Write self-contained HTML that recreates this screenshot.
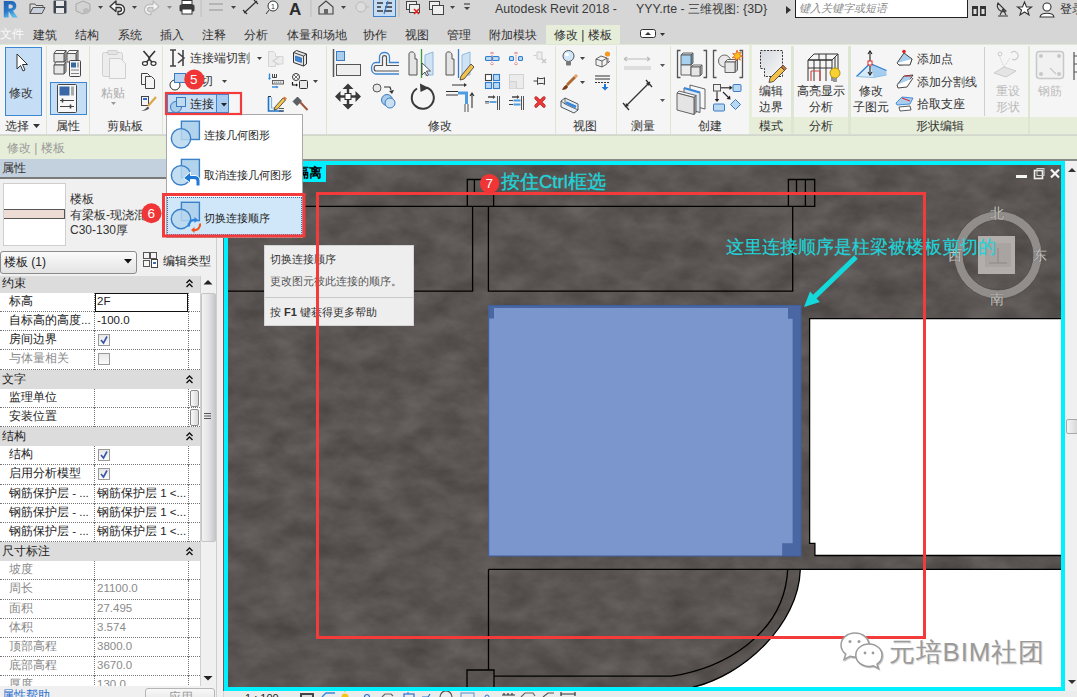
<!DOCTYPE html>
<html><head><meta charset="utf-8">
<style>
*{margin:0;padding:0;box-sizing:border-box}
html,body{width:1077px;height:697px;overflow:hidden;background:#d6d6d6;font-family:"Liberation Sans",sans-serif;font-size:12px;color:#222}
.a{position:absolute}
.t{position:absolute;white-space:nowrap;line-height:1;font-weight:500}
</style></head><body>
<!-- top title bar -->
<div class="a" style="left:0;top:0;width:1077px;height:44px;background:#d6d6d6"></div>

<!-- ===== TOP BAR ===== -->
<svg class="a" style="left:0;top:0" width="22" height="20"><defs><linearGradient id="gR" x1="0" y1="0" x2="0.4" y2="1"><stop offset="0" stop-color="#1f5db0"/><stop offset="0.6" stop-color="#2a78c8"/><stop offset="1" stop-color="#58b8ea"/></linearGradient></defs><path fill-rule="evenodd" fill="url(#gR)" d="M3.8 1h7.4a5 5 0 0 1 1.8 9.7L17.6 17.6h-5.2L8.6 11.3v6.3H3.8z M8.6 4.4v4h2.2a2 2 0 0 0 0-4z"/></svg>
<svg class="a" style="left:0;top:-2px" width="480" height="20" viewBox="0 0 480 20">
 <!-- open -->
 <path d="M30 6h5l1 1.5h7v2H33l-3 6z" fill="#dcdcdc" stroke="#555" stroke-width="1"/>
 <path d="M30 15.5l3-6h12l-3 6z" fill="#c8d0dc" stroke="#555" stroke-width="1"/>
 <!-- save -->
 <rect x="53.5" y="2.5" width="13" height="13" rx="1" fill="#3d4552"/>
 <rect x="56" y="3" width="8" height="5" fill="#e8e8e8"/>
 <rect x="56" y="10" width="8" height="5" fill="#e8e8e8"/>
 <!-- cube gray -->
 <path d="M76 6l7-3 7 3v7l-7 3-7-3z" fill="#d2d2d2" stroke="#a8a8a8"/>
 <circle cx="86" cy="13" r="3" fill="#bbb"/>
 <path d="M98 8h5l-2.5 3z" fill="#444"/>
 <!-- undo -->
 <path d="M110 8.5l6-5.5v3.5h3.5a5 5 0 0 1 0 10h-1.5v-3h1.5a2 2 0 0 0 0-4h-3.5v4z" fill="#f4f4f4" stroke="#333" stroke-width="1.3" stroke-linejoin="round"/>
 <path d="M132 8h5l-2.5 3z" fill="#444"/>
 <!-- redo gray -->
 <path d="M159 8.5l-6-5.5v3.5h-3.5a5 5 0 0 0 0 10h1.5v-3h-1.5a2 2 0 0 1 0-4h3.5v4z" fill="#f4f4f4" stroke="#bdbdbd" stroke-width="1.3" stroke-linejoin="round"/>
 <path d="M167 8h5l-2.5 3z" fill="#888"/>
 <!-- print -->
 <rect x="182" y="2.5" width="10" height="4" fill="#fff" stroke="#333"/>
 <rect x="179.5" y="6.5" width="15" height="7" rx="1.5" fill="#3b3b3b"/>
 <rect x="182" y="11" width="10" height="5" fill="#fff" stroke="#333"/>
 <rect x="200.5" y="1" width="1" height="18" fill="#bdbdbd"/>
 <!-- measure gray -->
 <path d="M209 6h14M209 12h14" stroke="#aaa" stroke-width="1.5"/>
 <path d="M231 8h5l-2.5 3z" fill="#444"/>
 <!-- aligned dim -->
 <path d="M244 15l13-12M243 12l4 4M254 2l4 4" stroke="#333" stroke-width="1.2"/>
 <!-- tag -->
 <circle cx="273" cy="8" r="5" fill="#fff" stroke="#333"/>
 <path d="M269 12l-3 4" stroke="#333"/>
 <text x="271" y="11" font-size="7" font-family="Liberation Sans" fill="#333">1</text>
 <!-- A -->
 <text x="289" y="17" font-size="17" font-weight="bold" font-family="Liberation Sans" fill="#2b2b2b">A</text>
 <rect x="310.5" y="1" width="1" height="18" fill="#bdbdbd"/>
 <!-- house -->
 <path d="M319 9l7-6 7 6v7h-14z" fill="#d8d8d8" stroke="#444" stroke-width="1.1"/>
 <rect x="324" y="11" width="4" height="5" fill="#666"/>
 <path d="M341 8h5l-2.5 3z" fill="#444"/>
 <!-- gray -->
 <path d="M356 9a5 5 0 1 0 10 0a5 5 0 1 0 -10 0" fill="#ddd" stroke="#bbb"/>
 <path d="M366 9l3 0" stroke="#bbb"/>
 <!-- thin lines highlighted -->
 <rect x="373.5" y="0.5" width="22" height="18" fill="#c5dcf3" stroke="#3c7fc9"/>
 <path d="M377 5h6M377 9h4M377 13h6M386 5h6M385 9h7M384 13h8" stroke="#333" stroke-width="1.5"/>
 <path d="M388 3l-4 13" stroke="#3a78c8" stroke-width="1.2"/>
 <rect x="398.5" y="1" width="1" height="18" fill="#bdbdbd"/>
 <!-- close hidden -->
 <rect x="406.5" y="3.5" width="10" height="8" fill="#eee" stroke="#444"/>
 <rect x="409.5" y="6.5" width="10" height="8" fill="#eee" stroke="#444"/>
 <path d="M414 11l5 5M419 11l-5 5" stroke="#e0201a" stroke-width="1.6"/>
 <!-- switch windows -->
 <rect x="429.5" y="3.5" width="10" height="8" fill="#eee" stroke="#444"/>
 <rect x="432.5" y="7.5" width="11" height="9" fill="#eee" stroke="#444"/>
 <path d="M450 8h5l-2.5 3z" fill="#444"/>
 <path d="M464 6h6" stroke="#444" stroke-width="1.2"/><path d="M464 9h6l-3 3z" fill="#444"/>
</svg>
<div class="t" style="left:495px;top:3px;font-size:12.4px;color:#3a3a3a">Autodesk Revit 2018 -</div>
<div class="t" style="left:636px;top:3px;font-size:12.4px;color:#3a3a3a">YYY.rte - 三维视图: {3D}</div>
<svg class="a" style="left:785px;top:5px" width="8" height="10"><path d="M1 1l5 4-5 4z" fill="#333"/></svg>
<div class="a" style="left:795px;top:0;width:173px;height:18px;background:#fff;border:1px solid #222;border-top:none"></div>
<div class="t" style="left:799px;top:3px;font-size:11px;font-style:italic;color:#8a8a8a">键入关键字或短语</div>
<svg class="a" style="left:968px;top:0" width="109" height="20" viewBox="968 0 109 20">
 <path d="M972 6h6v10h-6zM980 6h6v10h-6z" fill="#333"/><rect x="973.5" y="9" width="3" height="5" fill="#ddd"/><rect x="981.5" y="9" width="3" height="5" fill="#ddd"/>
 <path d="M998 16h10M1000 15l3-6M1006 15l-3-6M998 3a6 6 0 0 0 8 8z" fill="none" stroke="#333" stroke-width="1.1"/>
 <path d="M1024.5 2l2 5h5l-4 3 1.5 5-4.5-3-4.5 3 1.5-5-4-3h5z" fill="#fff" stroke="#333" stroke-width="1.1"/>
 <circle cx="1047" cy="7" r="4" fill="#fff" stroke="#333" stroke-width="1.1"/><path d="M1040 17c1-5 13-5 14 0z" fill="#fff" stroke="#333" stroke-width="1.1"/>
</svg>
<div class="t" style="left:1060px;top:3px;font-size:12px;color:#333">登录</div>
<!-- tabs -->
<div class="a" style="left:546px;top:25px;width:74px;height:20px;background:#e6eed9"></div>
<div class="t" style="left:0;top:28px;font-size:12px;color:#fafafa">文件</div>
<div class="t" style="left:33px;top:29px;font-size:12px;color:#333;word-spacing:0">建筑</div>
<div class="t" style="left:75px;top:29px;font-size:12px;color:#333">结构</div>
<div class="t" style="left:118px;top:29px;font-size:12px;color:#333">系统</div>
<div class="t" style="left:160px;top:29px;font-size:12px;color:#333">插入</div>
<div class="t" style="left:202px;top:29px;font-size:12px;color:#333">注释</div>
<div class="t" style="left:244px;top:29px;font-size:12px;color:#333">分析</div>
<div class="t" style="left:287px;top:29px;font-size:12px;color:#333">体量和场地</div>
<div class="t" style="left:363px;top:29px;font-size:12px;color:#333">协作</div>
<div class="t" style="left:405px;top:29px;font-size:12px;color:#333">视图</div>
<div class="t" style="left:447px;top:29px;font-size:12px;color:#333">管理</div>
<div class="t" style="left:489px;top:29px;font-size:12px;color:#333">附加模块</div>
<div class="t" style="left:554px;top:29px;font-size:12px;color:#333">修改 | 楼板</div>
<svg class="a" style="left:638px;top:27px" width="30" height="14"><rect x="2.5" y="2.5" width="15" height="8" rx="2" fill="#fff" stroke="#333"/><path d="M7 8l3-3 3 3z" fill="#333"/><path d="M22 6h5l-2.5 3z" fill="#333"/></svg>

<!-- ribbon -->
<div class="a" id="ribbon" style="left:0;top:44px;width:1077px;height:91px;background:#f5f5f5;border-top:1px solid #dfe8d4"></div>
<!-- context bar placeholder -->
<div class="a" style="left:0;top:135px;width:1077px;height:24px;background:#e6eed9;border-top:1px solid #d0d8c6"></div>
<div class="a" style="left:0;top:159px;width:1077px;height:2px;background:#8a8a8a"></div>

<!-- ===== RIBBON CONTENT ===== -->
<div class="a" style="left:752px;top:117px;width:39px;height:17px;background:#e6eed9"></div>
<div class="a" style="left:794px;top:117px;width:54px;height:17px;background:#e6eed9"></div>
<div class="a" style="left:851px;top:117px;width:177px;height:17px;background:#e6eed9"></div>
<div class="a" style="left:1030px;top:117px;width:47px;height:17px;background:#e6eed9"></div>
<div class="a" style="left:749px;top:45px;width:3px;height:89px;background:#e6eed9"></div>
<div class="a" style="left:0;top:134px;width:1077px;height:1px;background:#d9d9d9"></div>
<svg class="a" style="left:0;top:44px" width="1077" height="91" viewBox="0 44 1077 91">
 <!-- separators -->
 <g fill="#dde6d3">
 <rect x="46" y="46" width="1" height="88"/><rect x="89" y="46" width="1" height="88"/><rect x="162" y="46" width="1" height="88"/>
 <rect x="326" y="46" width="1" height="88"/><rect x="555" y="46" width="1" height="88"/><rect x="616" y="46" width="1" height="88"/>
 <rect x="670" y="46" width="1" height="88"/><rect x="791" y="46" width="3" height="88"/><rect x="848" y="46" width="3" height="88"/>
 <rect x="1028" y="46" width="2" height="88"/>
 </g>
 <rect x="984" y="47" width="1" height="69" fill="#cfcfcf"/>
 <!-- 修改 select button -->
 <rect x="5.5" y="47.5" width="36" height="68" fill="#c6def5" stroke="#3d87d2"/>
 <path d="M17 54v15l3.5-3.5 2.5 5.5 2-1-2.5-5.5h5z" fill="#fff" stroke="#333" stroke-width="1"/>
 <!-- 属性 -->
 <g stroke="#555" stroke-width="1" stroke-linejoin="round">
 <path d="M54 53.5l2-3h10l-2 3z" fill="#f8f8f8"/><path d="M64 53.5l2-3v9.5l-2 2.5z" fill="#bdbdbd"/><rect x="54" y="53.5" width="10" height="8.5" fill="#e6e6e6"/>
 <path d="M67 53.5l2-3h9l-2 3z" fill="#f8f8f8"/><path d="M76 53.5l2-3v9.5l-2 2.5z" fill="#bdbdbd"/><rect x="67" y="53.5" width="9" height="8.5" fill="#e6e6e6"/>
 <path d="M54 65l2-3h10l-2 3z" fill="#f8f8f8"/><path d="M64 65l2-3v9.5l-2 2.5z" fill="#bdbdbd"/><rect x="54" y="65" width="10" height="9" fill="#e6e6e6"/>
 </g>
 <rect x="69.5" y="60.5" width="11" height="16" rx="1" fill="#f4f4f4" stroke="#444"/><rect x="71" y="62.5" width="5" height="5" fill="#3566a6"/><rect x="77" y="62.5" width="2" height="5" fill="#aaa"/>
 <path d="M71 70h8M71 73.5h8" stroke="#666" stroke-width="0.8"/>
 <rect x="50.5" y="82.5" width="36" height="32" fill="#c6def5" stroke="#3d87d2"/>
 <rect x="57.5" y="84.5" width="19" height="28" rx="1" fill="#f7f7f7" stroke="#444"/>
 <rect x="59.5" y="86.5" width="10" height="9" fill="#3a68a6"/><rect x="71" y="86.5" width="3" height="9" fill="#aaa"/>
 <path d="M60 100.5h14M60 106.5h14" stroke="#444" stroke-width="1"/><path d="M62.5 98.5v4M70.5 104.5v4" stroke="#444" stroke-width="1.6"/>
 <!-- clipboard (gray) -->
 <rect x="102.5" y="52.5" width="20" height="24" rx="2" fill="#ececec" stroke="#cfcfcf"/>
 <rect x="107.5" y="50.5" width="10" height="4" rx="1.5" fill="#e4e4e4" stroke="#cfcfcf"/>
 <path d="M109.5 58.5h11l5 5v15h-16z" fill="#f3f3f3" stroke="#cfcfcf"/>
 <path d="M111 102h5l-2.5 3z" fill="#999"/>
 <!-- scissors, copy, match -->
 <path d="M143.5 51l6.5 7.5M155 51l-6.5 7.5" stroke="#333" stroke-width="1.6"/><path d="M150 58.5l-4 4M148.5 58.5l4 4" stroke="#333" stroke-width="1.6"/>
 <ellipse cx="145" cy="63.5" rx="2.5" ry="1.8" fill="#fff" stroke="#333" stroke-width="1.2"/><ellipse cx="153.5" cy="63.5" rx="2.5" ry="1.8" fill="#fff" stroke="#333" stroke-width="1.2"/>
 <path d="M141.5 73.5h6l2 2v9h-8z" fill="#f4f4f4" stroke="#444"/><path d="M145.5 76.5h6l3 3v9h-9z" fill="#f4f4f4" stroke="#444"/>
 <rect x="141.5" y="96.5" width="7" height="9" fill="#f4f4f4" stroke="#444"/><rect x="143" y="98" width="4" height="2" fill="#2a6fd0"/>
 <path d="M141 110.5c3 0 5-2 6.5-4l2 1.5c-2 2.5-5 3-8.5 2.5z" fill="#555"/><path d="M148 106l8-9" stroke="#d9a648" stroke-width="2.2"/>
 <!-- geometry panel row icons -->
 <path d="M170 50h6M170 66h6M173 50v16M178 53l6 5-6 5M183 50v16" fill="none" stroke="#444" stroke-width="1.6"/>
 <path d="M257 57h5l-2.5 3z" fill="#444"/>
 <circle cx="175" cy="85" r="5" fill="#fff" stroke="#333"/><rect x="174.5" y="73.5" width="11" height="9" fill="#b9d4ee" stroke="#3b7bc0"/>
 <path d="M222 80h5l-2.5 3z" fill="#444"/>
 <!-- right small icons col1 -->
 <path d="M268.5 51.5h5l2 2v3h7.5v7.5h-7.5v2.5h-7z" fill="#ececec" stroke="#d4d4d4"/><path d="M279 57l-6 4 6 4" fill="none" stroke="#d0d0d0" stroke-width="1.2"/>
 <path d="M269.5 73.5v5" stroke="#2a86e0" stroke-width="1.4"/><path d="M268 78l1.5 2 1.5-2z" fill="#2a86e0"/>
 <path d="M272.5 74v3.5h4v-3.5M274.5 74v3.5" fill="none" stroke="#333" stroke-width="0.9"/>
 <rect x="272.5" y="80.5" width="11" height="3.5" fill="#e4e4e4" stroke="#555" stroke-width="0.9"/><path d="M274 82.2h8" stroke="#555" stroke-width="0.6" stroke-dasharray="1.2 0.8"/>
 <path d="M272 87h5" stroke="#2a86e0" stroke-width="1.4"/><path d="M276.5 85.5l2 1.5-2 1.5z" fill="#2a86e0"/>
 <path d="M268.5 97v14h15" fill="none" stroke="#1f72c8" stroke-width="1.6"/><path d="M271.5 97v11h6" fill="none" stroke="#7ab4ea" stroke-width="1.2"/><path d="M268 96.5h3" stroke="#333"/>
 <path d="M275 107l8-9 2.5 2-8 9-3.5 1z" fill="#f5c84a" stroke="#333" stroke-width="0.8"/><path d="M283 98l1.5-1.5 2.5 2-1.5 1.5z" fill="#e07a3a"/>
 <path d="M279 108.5h5M279 111h5" stroke="#444" stroke-width="0.9"/>
 <!-- col2 -->
 <path d="M293.5 52.5l3-2 10 3.5v10l-3 2-10-3.5z" fill="#e6e6e6" stroke="#333" stroke-width="1"/><path d="M293.5 52.5l10 3.5v10M303.5 56l3-2" fill="none" stroke="#333" stroke-width="0.9"/>
 <rect x="295.5" y="56" width="6" height="4.5" fill="#3a86d8" stroke="#1f5fa8" stroke-width="0.6" transform="skewY(18) translate(0,-96)"/>
 <circle cx="296" cy="77" r="3.5" fill="#fff" stroke="#333" stroke-width="1"/><path d="M294 75l4 4M298 75l-4 4" stroke="#333" stroke-width="0.7"/>
 <path d="M292.5 82v3h4" fill="none" stroke="#111" stroke-width="1.2"/><path d="M296 83.5l2 1.5-2 1.5z" fill="#111"/>
 <rect x="299.5" y="80.5" width="8" height="8" rx="1" fill="#e8e8e8" stroke="#333"/>
 <path d="M313 80h5l-2.5 3z" fill="#444"/>
 <path d="M293 101.5l4.5-4.5 4 4-4.5 4.5z" fill="#5a6068" stroke="#333" stroke-width="0.6"/><path d="M300 102l7.5 8" stroke="#a0523a" stroke-width="2"/>
 <!-- 修改 panel big icons row1 -->
 <path d="M333.5 49v28" stroke="#555" stroke-width="1.5"/><rect x="336.5" y="51.5" width="8" height="9" fill="#a9cdeb" stroke="#3b7bc0"/><rect x="336.5" y="64.5" width="24" height="11" fill="#eee" stroke="#555"/>
 <path d="M399 62.5h-9.5v-5.5c0-6-10-6-10 0v5.5h-3.5c-6 0-6 11.5 0 11.5h23" fill="none" stroke="#3d86d2" stroke-width="1.3"/>
 <path d="M399 65.5h-12.5v-8c0-2.5-4-2.5-4 0v8h-6.5c-2.5 0-2.5 5.5 0 5.5h23" fill="none" stroke="#555" stroke-width="1.2"/>
 <path d="M409 75V54c0-3 6-3 6 1v4h2v16z" fill="#e4e4e4" stroke="#555"/><path d="M421.5 49v29" stroke="#3c9a3c" stroke-width="1.3"/><path d="M425 75V55l8-3v23z" fill="#cfe3f5" stroke="#8fb9dd"/><path d="M422 63v12l3-3 2 4 1.5-1-2-4h4z" fill="#fff" stroke="#333" stroke-width="0.8"/>
 <path d="M446 75V54c0-3 6-3 6 1v4h2v16z" fill="#e4e4e4" stroke="#555"/><path d="M458.5 49v29" stroke="#3a78c8" stroke-width="1.3"/><path d="M462 75V55l8-3v23z" fill="#cfe3f5" stroke="#8fb9dd"/><path d="M461 76l10-12 3 3-10 12-4 1z" fill="#f2c14e" stroke="#333" stroke-width="0.8"/>
 <!-- row2 -->
 <path d="M338 96.5h20M348 86.5v20" stroke="#3a3a3a" stroke-width="2.4"/><path d="M348 83.5l-5.5 5.5h11zM348 109.5l-5.5-5.5h11zM335 96.5l5.5-5.5v11zM361 96.5l-5.5-5.5v11z" fill="#3a3a3a"/><rect x="345" y="93.5" width="6" height="6" fill="#fff" stroke="#333"/>
 <circle cx="377" cy="88" r="4" fill="#e8e8e8" stroke="#555"/><path d="M384 87h6l1 3" fill="none" stroke="#333" stroke-width="1.2"/><path d="M389 91l3 3 2-4z" fill="#333"/>
 <circle cx="387" cy="100" r="5.5" fill="#a9cdeb" stroke="#3b7bc0"/><circle cx="390" cy="103" r="5" fill="#c9e0f3" stroke="#3b7bc0"/>
 <path d="M417 88.5a11 11 0 1 0 9.5-1" fill="none" stroke="#3a3a3a" stroke-width="2"/><path d="M420 83.5l9 4.5-8.5 4z" fill="#3a3a3a"/>
 <path d="M446 91.5h12M446 95h12M452 85h13" stroke="#333" stroke-width="1"/><path d="M464 83l3 2-3 2z" fill="#333"/><path d="M458 93h8.5v11" fill="none" stroke="#4d9be0" stroke-width="3"/><path d="M465 104v8M468 104v8" stroke="#555" stroke-width="1"/><path d="M472 108v-14M470 96l2-3 2 3" fill="none" stroke="#333" stroke-width="1.1"/>
 <!-- small icons -->
 <g stroke="#2f7fd0" fill="#bcd9f2" stroke-width="1.1">
 <rect x="485.5" y="56.5" width="6.5" height="4" rx="1"/><rect x="492.5" y="56.5" width="6.5" height="4" rx="1"/>
 <rect x="509.5" y="56.5" width="4" height="4" rx="1"/><rect x="518.5" y="56.5" width="4" height="4" rx="1"/>
 <rect x="485.5" y="82.5" width="6" height="6"/><rect x="493.5" y="82.5" width="6" height="6"/>
 </g>
 <rect x="485.5" y="74.5" width="6" height="6" fill="#fff" stroke="#444" stroke-width="1.1"/>
 <rect x="493.5" y="74.5" width="6" height="6" fill="#bcd9f2" stroke="#2f7fd0" stroke-width="1.1"/>
 <path d="M492 53v11M516 53v11" stroke="#e06060" stroke-width="0.9" stroke-dasharray="1.2 1"/><path d="M490 53.5l2-1.5 2 1.5M490 63.5l2 1.5 2-1.5M514 53.5l2-1.5 2 1.5M514 63.5l2 1.5 2-1.5" fill="none" stroke="#e06060" stroke-width="0.7"/>
 <rect x="509.5" y="74.5" width="14" height="14" fill="#ececec" stroke="#d2d2d2"/><path d="M509.5 88.5v-7h7v7" fill="#e4e4e4" stroke="#d2d2d2"/>
 <path d="M533.5 55.5h3M537 52v7h5v-7z" fill="#eee" stroke="#ccc" stroke-width="1"/><path d="M542 59l4 4M546 59l-4 4" stroke="#c4c4c4" stroke-width="1.3"/>
 <path d="M533.5 81h4M537.5 77.5v7l1.5-1h4l1.5 1v-7l-1.5 1h-4z" fill="#eee" stroke="#444" stroke-width="1"/>
 <path d="M488 97h6" stroke="#444" stroke-width="1.5"/><path d="M493 95l2.5 2-2.5 2z" fill="#444"/><path d="M485 101.5h4M485 103h4" stroke="#444" stroke-width="0.8"/><path d="M489.5 102h7" stroke="#4d9be0" stroke-width="1.8"/><path d="M497.5 96v14M499.5 96v14" stroke="#444" stroke-width="0.9"/>
 <path d="M512 97h6" stroke="#444" stroke-width="1.5"/><path d="M517 95l2.5 2-2.5 2z" fill="#444"/><path d="M509 100.5h4M509 104.5h4" stroke="#444" stroke-width="1.2"/><path d="M513.5 100.5h7M513.5 104.5h7" stroke="#4d9be0" stroke-width="1.8"/><path d="M521.5 96v14M523.5 96v14" stroke="#444" stroke-width="0.9"/>
 <path d="M536 98l8 8M544 98l-8 8" stroke="#b01818" stroke-width="3.2" stroke-linecap="round"/><path d="M536 98l8 8M544 98l-8 8" stroke="#ef3b3b" stroke-width="2" stroke-linecap="round"/>
 <!-- view panel -->
 <circle cx="568.5" cy="56" r="5.5" fill="#cfe6fb" stroke="#555" stroke-width="1"/><circle cx="567" cy="54.5" r="2" fill="#fff"/><rect x="566" y="61" width="5" height="4.5" rx="1" fill="#777"/>
 <path d="M580 57h5l-2.5 3z" fill="#444"/>
 <path d="M596 59l5-3 6 2v6l-5 3-6-2z" fill="#f2f2f2" stroke="#555" stroke-width="0.9"/><path d="M596 59l6 2v6M602 61l5-3" fill="none" stroke="#555" stroke-width="0.9"/><path d="M608 58v5l2-2" fill="none" stroke="#555" stroke-width="0.8"/><circle cx="607.5" cy="54" r="2.6" fill="#f39a1e"/>
 <path d="M566 84l8-8 2 2-8 8z" fill="#b0682e"/><path d="M574 76l2-2 2 2-2 2z" fill="#e0a060"/><path d="M562 90c1-3 3-5 5-5l1 2c-1 2-3 3-6 3z" fill="#7a3a16"/>
 <path d="M580 81h5l-2.5 3z" fill="#444"/>
 <path d="M595 76h15M595 79h15" stroke="#333" stroke-width="1.2"/><path d="M595 82.5h15" stroke="#333" stroke-width="1" stroke-dasharray="2 1"/><path d="M604 84v3h-2.5l3.5 3.5 3.5-3.5h-2.5v-3z" fill="#1e78d6"/>
 <path d="M561 101l4-3 13 6v6l-4 3-13-6z" fill="#e8f0f8" stroke="#444" stroke-width="0.9"/><path d="M565 98v6l13 6M561 101l4 3" fill="none" stroke="#444" stroke-width="0.8"/><path d="M566 102.5l10 4.5" stroke="#3a86d8" stroke-width="2.5"/>
 <!-- measure panel -->
 <path d="M624 59h26M624 59l3-2M624 59l3 2M650 59l-3-2M650 59l-3 2" stroke="#bbb" stroke-width="1.1"/>
 <rect x="624" y="66" width="27" height="4" fill="#ddd"/>
 <path d="M660 64h5l-2.5 3z" fill="#555"/>
 <path d="M625 107l25-25M623 103l6 7M646 80l6 7" stroke="#333" stroke-width="1.3"/><path d="M625 107l4-1-3-3zM650 82l-4 1 3 3z" fill="#333"/>
 <path d="M660 99h5l-2.5 3z" fill="#555"/>
 <!-- create panel -->
 <path d="M680.5 50.5h-3v27h3M703.5 50.5h3v27h-3" fill="none" stroke="#555" stroke-width="1.3"/>
 <g stroke="#555" stroke-width="0.9" stroke-linejoin="round">
 <path d="M681 55l2-2h10l-2 2z" fill="#d9ecfa"/><path d="M691 55l2-2v10l-2 2z" fill="#6aa8d8"/><rect x="681" y="55" width="10" height="10" fill="#a8d0ef"/>
 <path d="M681 65h10v10h-10z" fill="#ececec"/><path d="M691 67l2-2h9l-2 2z" fill="#f8f8f8"/><path d="M700 67l2-2v9l-2 2z" fill="#c4c4c4"/><rect x="691" y="67" width="9" height="9" fill="#e6e6e6"/>
 </g>
 <path d="M716.5 50.5h-3v27h3M739.5 50.5h3v27h-3" fill="none" stroke="#555" stroke-width="1.3"/>
 <circle cx="724.5" cy="61" r="6" fill="#e8e8e8" stroke="#666" stroke-width="1"/>
 <g stroke="#555" stroke-width="0.9" stroke-linejoin="round"><path d="M725 62l2.5-2.5h10l-2.5 2.5z" fill="#f8f8f8"/><path d="M735 62l2.5-2.5v10.5l-2.5 2.5z" fill="#c4c4c4"/><rect x="725" y="62" width="10" height="10.5" fill="#e6e6e6"/></g>
 <path d="M737 50l1.2 3 3-1-1.5 2.8 3 1.5-3.2.8.8 3.1-2.6-1.8-2 2.4-.3-3.1-3.2.1 2.5-2-2-2.4 3.1.6z" fill="#f6c21c" stroke="#e9591a" stroke-width="0.8"/>
 <g stroke="#555" stroke-width="0.9" stroke-linejoin="round">
 <path d="M690 85l15 4v20l-15-4z" fill="#f7f7f7"/>
 <path d="M684 88l16 4.5v20l-16-4.5z" fill="#dfe8f2"/><path d="M684 88l16 4.5" stroke="#3a86d8" stroke-width="2"/>
 <path d="M677 93l2-2 17 4.5-2 2z" fill="#fafafa"/><path d="M694 97.5l2-2v17l-2 2z" fill="#bdbdbd"/><path d="M677 93l17 4.5v17l-17-4.5z" fill="#e4e4e4"/>
 </g>
 <rect x="713.5" y="84.5" width="7" height="6.5" fill="#eee" stroke="#555"/><path d="M721 87.8h9" stroke="#222" stroke-width="1.1"/><path d="M729.5 85.5l3 2.3-3 2.3z" fill="#222"/>
 <rect x="733" y="84.5" width="8" height="7" rx="1" fill="#b9d8f2" stroke="#3b7bc0"/>
 <path d="M717 91.5v8" stroke="#222" stroke-width="1.1"/><path d="M714.7 99l2.3 3 2.3-3z" fill="#222"/>
 <path d="M723 92l6 6" stroke="#222" stroke-width="1.1"/><path d="M730.5 99.5l-.5-4-3.5 3.5z" fill="#222"/>
 <rect x="713.5" y="104" width="11" height="7" rx="1" fill="#b9d8f2" stroke="#3b7bc0"/>
 <path d="M735.5 99.5l5 5-5 5-5-5z" fill="#b9d8f2" stroke="#3b7bc0"/>
 <!-- mode: edit boundary -->
 <defs><linearGradient id="gEB" x1="0" y1="0" x2="1" y2="1"><stop offset="0" stop-color="#d4d8de"/><stop offset="1" stop-color="#f8f8f8"/></linearGradient></defs>
 <path d="M760.5 50.5h22v26h-18v-8h-4z" fill="url(#gEB)" stroke="#333" stroke-dasharray="2 1.3"/>
 <path d="M770 78l11-11 3.5 3.5-11 11-4.5 1z" fill="#f3c04a" stroke="#333" stroke-width="0.8"/><path d="M781 67l2-2 3.5 3.5-2 2z" fill="#c0703a" stroke="#333" stroke-width="0.6"/>
 <!-- analysis highlight -->
 <path d="M808 60l6-6h24l-6 6zM808 60v21M832 60v21M838 54v20M808 60h24M814 60v21M820 60v21M826 60v21M819 54v6M826 54v6M835 57v20M808 68h24" fill="none" stroke="#333" stroke-width="1"/>
 <path d="M811 71h9M811 71v10M820 71v10" fill="none" stroke="#d24a4a" stroke-width="1.2"/>
 <circle cx="835" cy="73" r="5" fill="#f8d233" stroke="#b08c10"/><rect x="833" y="78" width="4" height="4" fill="#999"/>
 <!-- modify sub elements -->
 <path d="M856.5 76.5l13.5-13 3.5 14z" fill="#d6eaf8"/><path d="M870 63.5l16.5 7v4.5l-13 2.5z" fill="#a6cdee"/><path d="M856.5 76.5l13.5-13 16.5 7" fill="none" stroke="#2f7fd0" stroke-width="1.3"/><path d="M856.5 76.5l17 1 13-2.5" fill="none" stroke="#8fbfe6" stroke-width="1"/><path d="M870 51v10M870 66v9" stroke="#222" stroke-width="1.1"/><path d="M868 54l2-3 2 3M868 72l2 3 2-3" fill="none" stroke="#222" stroke-width="1.1"/><rect x="868" y="61" width="4" height="4" fill="#fff" stroke="#d22"/>
 <path d="M897 63l7-10 8 6-2 5-11 1z" fill="#a9cdeb" stroke="#333" stroke-width="0.9"/><path d="M897 63l2 2h11l2-6" fill="#fff" stroke="#333" stroke-width="0.9"/><circle cx="904" cy="51.5" r="1.8" fill="#d22"/>
 <path d="M897 85l7-9 9-1-6 9-9 2z" fill="#a9cdeb" stroke="#333" stroke-width="0.9"/><path d="M897 85l1 3 9-1 6-9" fill="#fff" stroke="#333" stroke-width="0.9"/><path d="M905 76l6 0" stroke="#d22" stroke-width="1"/>
 <path d="M896 103l6-6 11 1-3 6-13 1z" fill="#a9cdeb" stroke="#3a86d8" stroke-width="0.9"/><path d="M899 107l11-1 1 4-11 1z" fill="#fff" stroke="#333" stroke-width="0.8"/><path d="M902 98l8 3" stroke="#d22" stroke-width="1"/>
 <!-- reset shape gray -->
 <path d="M994 73l10-6 12 4-10 6z" fill="#e4e4e4" stroke="#ccc"/><path d="M999 55l5 12M1010 58l-6 9" stroke="#ccc" stroke-dasharray="1 1"/><circle cx="1000" cy="54" r="2" fill="none" stroke="#ccc"/>
 <path d="M1011 53a4 4 0 1 1 1 6" fill="none" stroke="#ccc" stroke-width="1.2"/>
 <!-- rebar gray -->
 <rect x="1036.5" y="51.5" width="27" height="27" rx="3" fill="#f1f1f1" stroke="#c8c8c8" stroke-width="1.5"/>
 <circle cx="1041" cy="56" r="2" fill="#c8c8c8"/><circle cx="1059" cy="56" r="2" fill="#c8c8c8"/><circle cx="1041" cy="74" r="2" fill="#c8c8c8"/><circle cx="1059" cy="74" r="2" fill="#c8c8c8"/>
 <path d="M1050 68l6 6" stroke="#c8c8c8" stroke-width="1.2"/>
 <path d="M1074 52v28M1074 56h3M1074 64h3M1074 72h3" stroke="#555" stroke-width="1.2"/>
</svg>
<div class="t" style="left:9px;top:87px;font-size:12px;color:#333">修改</div>
<div class="t" style="left:5px;top:120px;font-size:12px;color:#333">选择</div>
<svg class="a" style="left:33px;top:124px" width="8" height="6"><path d="M0 0h7l-3.5 4z" fill="#333"/></svg>
<div class="t" style="left:56px;top:120px;font-size:12px;color:#333">属性</div>
<div class="t" style="left:101px;top:87px;font-size:12px;color:#aaa">粘贴</div>
<div class="t" style="left:107px;top:120px;font-size:12px;color:#333">剪贴板</div>
<div class="t" style="left:190px;top:52px;font-size:12px;color:#333">连接端切割</div>
<div class="t" style="left:189px;top:75px;font-size:12px;color:#333">剪切</div>
<div class="t" style="left:428px;top:120px;font-size:12px;color:#333">修改</div>
<div class="t" style="left:573px;top:120px;font-size:12px;color:#333">视图</div>
<div class="t" style="left:631px;top:120px;font-size:12px;color:#333">测量</div>
<div class="t" style="left:698px;top:120px;font-size:12px;color:#333">创建</div>
<div class="t" style="left:759px;top:85px;font-size:12px;color:#333">编辑</div>
<div class="t" style="left:759px;top:101px;font-size:12px;color:#333">边界</div>
<div class="t" style="left:759px;top:120px;font-size:12px;color:#333">模式</div>
<div class="t" style="left:797px;top:85px;font-size:12px;color:#333">高亮显示</div>
<div class="t" style="left:809px;top:101px;font-size:12px;color:#333">分析</div>
<div class="t" style="left:809px;top:120px;font-size:12px;color:#333">分析</div>
<div class="t" style="left:859px;top:85px;font-size:12px;color:#333">修改</div>
<div class="t" style="left:853px;top:101px;font-size:12px;color:#333">子图元</div>
<div class="t" style="left:917px;top:53px;font-size:12px;color:#333">添加点</div>
<div class="t" style="left:917px;top:76px;font-size:12px;color:#333">添加分割线</div>
<div class="t" style="left:917px;top:98px;font-size:12px;color:#333">拾取支座</div>
<div class="t" style="left:916px;top:120px;font-size:12px;color:#333">形状编辑</div>
<div class="t" style="left:996px;top:85px;font-size:12px;color:#bbb">重设</div>
<div class="t" style="left:996px;top:101px;font-size:12px;color:#bbb">形状</div>
<div class="t" style="left:1038px;top:85px;font-size:12px;color:#bbb">钢筋</div>
<div class="t" style="left:7px;top:142px;font-size:12px;color:#9a9a9a">修改 | 楼板</div>

<!-- left panel -->
<div class="a" id="props" style="left:0;top:160px;width:223px;height:537px;background:#f0f0f0"></div>

<!-- ===== PROPERTIES PANEL ===== -->
<div class="a" style="left:0;top:159px;width:223px;height:18px;background:#c3d0de"></div>
<div class="t" style="left:2px;top:162px;color:#333">属性</div>
<div class="a" style="left:0;top:177px;width:223px;height:2px;background:#7a7a7a"></div>
<div class="a" style="left:3px;top:183px;width:63px;height:63px;background:#fff;border:1px solid #cfcfcf"></div>
<div class="a" style="left:4px;top:209px;width:61px;height:10px;background:#ecdcd4;border:1px solid #555;border-left:none"></div>
<div class="t" style="left:70px;top:193px;color:#333">楼板</div>
<div class="t" style="left:70px;top:209px;color:#333">有梁板-现浇混</div>
<div class="t" style="left:70px;top:224px;color:#333">C30-130厚</div>
<div class="a" style="left:0;top:251px;width:137px;height:23px;border:1px solid #8c8c8c;border-radius:3px;background:linear-gradient(#fbfbfb,#e3e3e3)"></div>
<div class="t" style="left:4px;top:256px;color:#222">楼板 (1)</div>
<svg class="a" style="left:124px;top:259px" width="10" height="6"><path d="M0 0h8l-4 4.5z" fill="#111"/></svg>
<svg class="a" style="left:142px;top:251px" width="17" height="18"><rect x="1.5" y="1.5" width="6" height="6" fill="#f4f4f4" stroke="#555"/><rect x="1.5" y="9.5" width="6" height="6" fill="#f4f4f4" stroke="#555"/><rect x="8.5" y="1.5" width="6" height="6" fill="#f4f4f4" stroke="#555"/><rect x="9.5" y="8.5" width="6" height="8" fill="#fff" stroke="#444"/><rect x="11" y="11" width="3" height="2" fill="#3b6fb0"/></svg>
<div class="t" style="left:163px;top:255px;color:#222">编辑类型</div>
<div class="a" style="left:0;top:276px;width:200px;height:17px;background:#dcdcdc"></div>
<div class="t" style="left:2px;top:277.5px;font-size:11.5px;color:#222">约束</div>
<svg class="a" style="left:186px;top:279px" width="8" height="9"><path d="M0.5 4l3-3 3 3M0.5 8l3-3 3 3" fill="none" stroke="#111" stroke-width="1.4"/></svg>
<div class="a" style="left:0;top:293px;width:200px;height:19px;background:#fff;border-bottom:1px dotted #777"></div>
<div class="a" style="left:94px;top:293px;width:1px;height:19px;border-left:1px dotted #777"></div>
<div class="a" style="left:188px;top:293px;width:1px;height:19px;border-left:1px dotted #777"></div>
<div class="t" style="left:9px;top:295.5px;font-size:11.5px;color:#222">标高</div>
<div class="a" style="left:95px;top:293px;width:93px;height:19px;border:1px solid #111;background:#fff"></div>
<div class="t" style="left:97px;top:295.5px;font-size:11.5px;color:#222">2F</div>
<div class="a" style="left:0;top:312px;width:200px;height:19px;background:#fff;border-bottom:1px dotted #777"></div>
<div class="a" style="left:94px;top:312px;width:1px;height:19px;border-left:1px dotted #777"></div>
<div class="a" style="left:188px;top:312px;width:1px;height:19px;border-left:1px dotted #777"></div>
<div class="t" style="left:9px;top:314.5px;font-size:11.5px;color:#222">自标高的高度...</div>
<div class="t" style="left:97px;top:314.5px;font-size:11.5px;color:#222">-100.0</div>
<div class="a" style="left:0;top:331px;width:200px;height:19px;background:#fff;border-bottom:1px dotted #777"></div>
<div class="a" style="left:94px;top:331px;width:1px;height:19px;border-left:1px dotted #777"></div>
<div class="a" style="left:188px;top:331px;width:1px;height:19px;border-left:1px dotted #777"></div>
<div class="t" style="left:9px;top:333.5px;font-size:11.5px;color:#222">房间边界</div>
<div class="a" style="left:98px;top:334px;width:12px;height:12px;border:1px solid #9a9a9a;background:linear-gradient(#e8e8e8,#fafafa)"></div>
<svg class="a" style="left:99px;top:335px" width="10" height="10"><path d="M2 5l2.5 3L8 1.5" fill="none" stroke="#3b56a8" stroke-width="1.6"/></svg>
<div class="a" style="left:0;top:350px;width:200px;height:20px;background:#fff;border-bottom:1px dotted #777"></div>
<div class="a" style="left:94px;top:350px;width:1px;height:20px;border-left:1px dotted #777"></div>
<div class="a" style="left:188px;top:350px;width:1px;height:20px;border-left:1px dotted #777"></div>
<div class="t" style="left:9px;top:352.5px;font-size:11.5px;color:#8a8a8a">与体量相关</div>
<div class="a" style="left:98px;top:353px;width:12px;height:12px;border:1px solid #9a9a9a;background:linear-gradient(#e8e8e8,#fafafa)"></div>
<div class="a" style="left:0;top:370px;width:200px;height:19px;background:#dcdcdc"></div>
<div class="t" style="left:2px;top:373.5px;font-size:11.5px;color:#222">文字</div>
<svg class="a" style="left:186px;top:375px" width="8" height="9"><path d="M0.5 4l3-3 3 3M0.5 8l3-3 3 3" fill="none" stroke="#111" stroke-width="1.4"/></svg>
<div class="a" style="left:0;top:389px;width:200px;height:19px;background:#fff;border-bottom:1px dotted #777"></div>
<div class="a" style="left:94px;top:389px;width:1px;height:19px;border-left:1px dotted #777"></div>
<div class="a" style="left:188px;top:389px;width:1px;height:19px;border-left:1px dotted #777"></div>
<div class="t" style="left:9px;top:391.5px;font-size:11.5px;color:#222">监理单位</div>
<div class="a" style="left:190px;top:390px;width:9px;height:17px;border:1px solid #8a8a8a;border-radius:2px;background:linear-gradient(90deg,#fafafa,#d8d8d8)"></div>
<div class="a" style="left:0;top:408px;width:200px;height:19px;background:#fff;border-bottom:1px dotted #777"></div>
<div class="a" style="left:94px;top:408px;width:1px;height:19px;border-left:1px dotted #777"></div>
<div class="a" style="left:188px;top:408px;width:1px;height:19px;border-left:1px dotted #777"></div>
<div class="t" style="left:9px;top:410.5px;font-size:11.5px;color:#222">安装位置</div>
<div class="a" style="left:190px;top:409px;width:9px;height:17px;border:1px solid #8a8a8a;border-radius:2px;background:linear-gradient(90deg,#fafafa,#d8d8d8)"></div>
<div class="a" style="left:0;top:427px;width:200px;height:19px;background:#dcdcdc"></div>
<div class="t" style="left:2px;top:430.5px;font-size:11.5px;color:#222">结构</div>
<svg class="a" style="left:186px;top:432px" width="8" height="9"><path d="M0.5 4l3-3 3 3M0.5 8l3-3 3 3" fill="none" stroke="#111" stroke-width="1.4"/></svg>
<div class="a" style="left:0;top:446px;width:200px;height:19px;background:#fff;border-bottom:1px dotted #777"></div>
<div class="a" style="left:94px;top:446px;width:1px;height:19px;border-left:1px dotted #777"></div>
<div class="a" style="left:188px;top:446px;width:1px;height:19px;border-left:1px dotted #777"></div>
<div class="t" style="left:9px;top:448.5px;font-size:11.5px;color:#222">结构</div>
<div class="a" style="left:98px;top:449px;width:12px;height:12px;border:1px solid #9a9a9a;background:linear-gradient(#e8e8e8,#fafafa)"></div>
<svg class="a" style="left:99px;top:450px" width="10" height="10"><path d="M2 5l2.5 3L8 1.5" fill="none" stroke="#3b56a8" stroke-width="1.6"/></svg>
<div class="a" style="left:0;top:465px;width:200px;height:20px;background:#fff;border-bottom:1px dotted #777"></div>
<div class="a" style="left:94px;top:465px;width:1px;height:20px;border-left:1px dotted #777"></div>
<div class="a" style="left:188px;top:465px;width:1px;height:20px;border-left:1px dotted #777"></div>
<div class="t" style="left:9px;top:467.5px;font-size:11.5px;color:#222">启用分析模型</div>
<div class="a" style="left:98px;top:468px;width:12px;height:12px;border:1px solid #9a9a9a;background:linear-gradient(#e8e8e8,#fafafa)"></div>
<svg class="a" style="left:99px;top:469px" width="10" height="10"><path d="M2 5l2.5 3L8 1.5" fill="none" stroke="#3b56a8" stroke-width="1.6"/></svg>
<div class="a" style="left:0;top:485px;width:200px;height:19px;background:#fff;border-bottom:1px dotted #777"></div>
<div class="a" style="left:94px;top:485px;width:1px;height:19px;border-left:1px dotted #777"></div>
<div class="a" style="left:188px;top:485px;width:1px;height:19px;border-left:1px dotted #777"></div>
<div class="t" style="left:9px;top:487.5px;font-size:11.5px;color:#222">钢筋保护层 - ...</div>
<div class="t" style="left:97px;top:487.5px;font-size:11.5px;color:#222">钢筋保护层 1 <...</div>
<div class="a" style="left:0;top:504px;width:200px;height:19px;background:#fff;border-bottom:1px dotted #777"></div>
<div class="a" style="left:94px;top:504px;width:1px;height:19px;border-left:1px dotted #777"></div>
<div class="a" style="left:188px;top:504px;width:1px;height:19px;border-left:1px dotted #777"></div>
<div class="t" style="left:9px;top:506.5px;font-size:11.5px;color:#222">钢筋保护层 - ...</div>
<div class="t" style="left:97px;top:506.5px;font-size:11.5px;color:#222">钢筋保护层 1 <...</div>
<div class="a" style="left:0;top:523px;width:200px;height:19px;background:#fff;border-bottom:1px dotted #777"></div>
<div class="a" style="left:94px;top:523px;width:1px;height:19px;border-left:1px dotted #777"></div>
<div class="a" style="left:188px;top:523px;width:1px;height:19px;border-left:1px dotted #777"></div>
<div class="t" style="left:9px;top:525.5px;font-size:11.5px;color:#222">钢筋保护层 - ...</div>
<div class="t" style="left:97px;top:525.5px;font-size:11.5px;color:#222">钢筋保护层 1 <...</div>
<div class="a" style="left:0;top:542px;width:200px;height:19px;background:#dcdcdc"></div>
<div class="t" style="left:2px;top:545.5px;font-size:11.5px;color:#222">尺寸标注</div>
<svg class="a" style="left:186px;top:547px" width="8" height="9"><path d="M0.5 4l3-3 3 3M0.5 8l3-3 3 3" fill="none" stroke="#111" stroke-width="1.4"/></svg>
<div class="a" style="left:0;top:561px;width:200px;height:19px;background:#fff;border-bottom:1px dotted #777"></div>
<div class="a" style="left:94px;top:561px;width:1px;height:19px;border-left:1px dotted #777"></div>
<div class="a" style="left:188px;top:561px;width:1px;height:19px;border-left:1px dotted #777"></div>
<div class="t" style="left:9px;top:563.5px;font-size:11.5px;color:#8a8a8a">坡度</div>
<div class="a" style="left:0;top:580px;width:200px;height:20px;background:#fff;border-bottom:1px dotted #777"></div>
<div class="a" style="left:94px;top:580px;width:1px;height:20px;border-left:1px dotted #777"></div>
<div class="a" style="left:188px;top:580px;width:1px;height:20px;border-left:1px dotted #777"></div>
<div class="t" style="left:9px;top:582.5px;font-size:11.5px;color:#8a8a8a">周长</div>
<div class="t" style="left:97px;top:582.5px;font-size:11.5px;color:#8a8a8a">21100.0</div>
<div class="a" style="left:0;top:600px;width:200px;height:19px;background:#fff;border-bottom:1px dotted #777"></div>
<div class="a" style="left:94px;top:600px;width:1px;height:19px;border-left:1px dotted #777"></div>
<div class="a" style="left:188px;top:600px;width:1px;height:19px;border-left:1px dotted #777"></div>
<div class="t" style="left:9px;top:602.5px;font-size:11.5px;color:#8a8a8a">面积</div>
<div class="t" style="left:97px;top:602.5px;font-size:11.5px;color:#8a8a8a">27.495</div>
<div class="a" style="left:0;top:619px;width:200px;height:19px;background:#fff;border-bottom:1px dotted #777"></div>
<div class="a" style="left:94px;top:619px;width:1px;height:19px;border-left:1px dotted #777"></div>
<div class="a" style="left:188px;top:619px;width:1px;height:19px;border-left:1px dotted #777"></div>
<div class="t" style="left:9px;top:621.5px;font-size:11.5px;color:#8a8a8a">体积</div>
<div class="t" style="left:97px;top:621.5px;font-size:11.5px;color:#8a8a8a">3.574</div>
<div class="a" style="left:0;top:638px;width:200px;height:19px;background:#fff;border-bottom:1px dotted #777"></div>
<div class="a" style="left:94px;top:638px;width:1px;height:19px;border-left:1px dotted #777"></div>
<div class="a" style="left:188px;top:638px;width:1px;height:19px;border-left:1px dotted #777"></div>
<div class="t" style="left:9px;top:640.5px;font-size:11.5px;color:#8a8a8a">顶部高程</div>
<div class="t" style="left:97px;top:640.5px;font-size:11.5px;color:#8a8a8a">3800.0</div>
<div class="a" style="left:0;top:657px;width:200px;height:19px;background:#fff;border-bottom:1px dotted #777"></div>
<div class="a" style="left:94px;top:657px;width:1px;height:19px;border-left:1px dotted #777"></div>
<div class="a" style="left:188px;top:657px;width:1px;height:19px;border-left:1px dotted #777"></div>
<div class="t" style="left:9px;top:659.5px;font-size:11.5px;color:#8a8a8a">底部高程</div>
<div class="t" style="left:97px;top:659.5px;font-size:11.5px;color:#8a8a8a">3670.0</div>
<div class="a" style="left:0;top:676px;width:200px;height:19px;background:#fff;border-bottom:1px dotted #777"></div>
<div class="a" style="left:94px;top:676px;width:1px;height:19px;border-left:1px dotted #777"></div>
<div class="a" style="left:188px;top:676px;width:1px;height:19px;border-left:1px dotted #777"></div>
<div class="t" style="left:9px;top:678.5px;font-size:11.5px;color:#8a8a8a">厚度</div>
<div class="t" style="left:97px;top:678.5px;font-size:11.5px;color:#8a8a8a">130.0</div>
<!-- scrollbar -->
<div class="a" style="left:200px;top:276px;width:16px;height:410px;background:#f0f0f0;border-left:1px solid #d0d0d0"></div>
<svg class="a" style="left:203px;top:279px" width="10" height="7"><path d="M0.5 5.5l4.5-4.5 4.5 4.5z" fill="#222"/></svg>
<div class="a" style="left:201px;top:293px;width:15px;height:249px;border-radius:2px;background:linear-gradient(90deg,#f3f3f3,#e4e4e6 50%,#c8c8cc);border:1px solid #c4c4c4"></div>
<svg class="a" style="left:204px;top:412px" width="8" height="8"><path d="M0 1.5h7M0 4h7M0 6.5h7" stroke="#555" stroke-width="1"/></svg>
<svg class="a" style="left:203px;top:675px" width="10" height="7"><path d="M0.5 1l4.5 4.5 4.5-4.5z" fill="#222"/></svg>
<div class="a" style="left:0;top:686px;width:223px;height:11px;background:#f0f0f0"></div>
<div class="t" style="left:2px;top:690px;font-size:11.5px;color:#2a6fd0">属性帮助</div>
<div class="a" style="left:145px;top:688px;width:70px;height:14px;border:1px solid #b5b5b5;border-radius:3px;background:linear-gradient(#f8f8f8,#e8e8e8)"></div>
<div class="t" style="left:169px;top:692px;font-size:11.5px;color:#999">应用</div>
<div class="a" style="left:216px;top:161px;width:1px;height:536px;background:#cfcfcf"></div>
<div class="a" style="left:223px;top:161px;width:1px;height:530px;background:#6b6060"></div>

<!-- viewport -->
<div class="a" style="left:224px;top:161px;width:841px;height:530px;background:#00f0ff"></div>
<svg class="a" style="left:228px;top:165px" width="833" height="522" viewBox="228 165 833 522">
<defs>
<filter id="tex" x="228" y="165" width="833" height="522" filterUnits="userSpaceOnUse" color-interpolation-filters="sRGB">
<feTurbulence type="fractalNoise" baseFrequency="0.03 0.05" numOctaves="5" seed="7"/>
<feColorMatrix type="matrix" values="0.15 0 0 0 0.275  0.15 0 0 0 0.256  0.15 0 0 0 0.244  0 0 0 0 1"/>
</filter>
</defs>
<rect x="228" y="165" width="833" height="522" fill="#5c5754"/>
<rect x="228" y="165" width="833" height="522" filter="url(#tex)"/>
<g stroke="#000" stroke-width="1.3" fill="none">
<path d="M228 206.3H814.7V179.5H788.4V206.3M796.5 179.5V192M805.4 179.5V206.3"/>
<path d="M467.3 206.3V179.5H493.6V206.3M474.4 179.5V192"/>
<path d="M472.6 206.3V291.1H228M488.4 206.3V291.1H792.7V206.3"/>
</g>
<!-- white areas -->
<path d="M809.6 318.6H1061V555.5H814.9V543.3H809.6Z" fill="#fff"/><path d="M1061 318.6H809.6V543.3H814.9V555.5H1061" fill="none" stroke="#000" stroke-width="1.3"/>
<path d="M800.3 569.4H1061V688H692.7C742.7 676.1 798.6 625.1 800.3 569.4Z" fill="#fff"/><path d="M1061 569.4H800.3C798.6 625.1 742.7 676.1 692.7 687.1" fill="none" stroke="#000" stroke-width="1.3"/>
<!-- lower lines -->
<g stroke="#000" stroke-width="1.3" fill="none">
<path d="M488.5 569.4H800.3M488.5 569.4V670M467 687V670H494V687M494 676.2H671.6C720.4 668.8 784.4 636.7 787.7 569.4"/>
</g>
<!-- blue slab -->
<rect x="488.7" y="305.5" width="312.3" height="250.5" fill="#7b96cd"/>
<path d="M488.7 305.5H801V556H782.2V543.3H792.6V318.7H788V308H494V318.6H488.7Z" fill="#4a66a3"/>
<rect x="488.7" y="305.5" width="312.3" height="250.5" fill="none" stroke="#3f5e9e" stroke-width="1"/>
</svg>
<!-- right scrollbar -->
<div class="a" style="left:1065px;top:161px;width:12px;height:530px;background:#f0f0f0"></div>
<svg class="a" style="left:1065px;top:161px" width="12" height="530" viewBox="1065 161 12 530"><path d="M1068 172l4-4 4 4z" fill="#333"/><path d="M1068 680l4 4 4-4z" fill="#333"/></svg>
<div class="a" style="left:1066px;top:419px;width:12px;height:15px;border:1px solid #a8a8a8;border-radius:2px;background:linear-gradient(90deg,#f4f4f4,#d8d8d8)"></div>
<!-- status bar -->


<!-- ===== OVERLAYS ===== -->
<!-- isolate label -->
<div class="a" style="left:228px;top:165px;width:98px;height:17px;background:#00f0ff"></div>
<div class="t" style="left:296px;top:166.5px;font-size:12.5px;font-weight:bold;color:#000">隔离</div>
<!-- viewport annotations -->
<svg class="a" style="left:0;top:0" width="1077" height="697" viewBox="0 0 1077 697">
 <!-- arrow -->
 <path d="M857.7 258.8L816.5 298.4L820 302L804 307L810 291.5L813.1 294.8L854.3 255.2Z" fill="#14d9dc"/>
 <!-- viewcube -->
 <circle cx="998" cy="255" r="39.5" fill="none" stroke="#918d8a" stroke-width="9"/><circle cx="998" cy="255" r="44" fill="none" stroke="#4e4a47" stroke-width="0.8"/><circle cx="998" cy="255" r="35" fill="none" stroke="#4e4a47" stroke-width="0.8"/>
 <rect x="978" y="236" width="37" height="38" fill="#b3aeab"/>
 <rect x="985" y="243" width="26" height="24" fill="#a9a4a1"/>
 <path d="M989 263h18M998 248v15" stroke="#8d8884" stroke-width="1"/>
 <!-- window controls -->
 <rect x="1016" y="175" width="11" height="3" fill="#f4f4f4"/>
 <rect x="1034.5" y="170.5" width="8" height="8" fill="none" stroke="#f0f0f0" stroke-width="1.6"/>
 <rect x="1037" y="168.5" width="7" height="7" fill="none" stroke="#cfcfcf" stroke-width="1"/>
 <path d="M1051 169.5l8 8M1059 169.5l-8 8" stroke="#f4f4f4" stroke-width="2.2"/>
</svg>
<div class="t" style="left:990px;top:206px;font-size:14px;color:#c9c5c2;text-shadow:0 0 1px #444">北</div>
<div class="t" style="left:990px;top:292px;font-size:14px;color:#c9c5c2;text-shadow:0 0 1px #444">南</div>
<div class="t" style="left:948px;top:248px;font-size:14px;color:#c9c5c2;text-shadow:0 0 1px #444">西</div>
<div class="t" style="left:1033px;top:248px;font-size:14px;color:#c9c5c2;text-shadow:0 0 1px #444">东</div>
<div class="t" style="left:501px;top:173px;font-size:18.5px;color:#1fd3d8;-webkit-text-stroke:0.35px #1fd3d8">按住Ctrl框选</div>
<div class="t" style="left:726px;top:238px;font-size:18.2px;color:#1fd3d8;-webkit-text-stroke:0.2px #1fd3d8">这里连接顺序是柱梁被楼板剪切的</div>
<!-- tooltip -->
<div class="a" style="left:264px;top:245px;width:150px;height:81px;background:#eeeeee;border:1px solid #d4d4d4"></div>
<div class="a" style="left:265px;top:297px;width:148px;height:1px;background:#c9c9c9"></div>
<div class="t" style="left:270px;top:254px;font-size:11px;color:#333">切换连接顺序</div>
<div class="t" style="left:270px;top:276px;font-size:11px;color:#555">更改图元彼此连接的顺序。</div>
<div class="t" style="left:270px;top:306.5px;font-size:11px;color:#333">按 <b>F1</b> 键获得更多帮助</div>
<svg class="a" style="left:0;top:0" width="1077" height="697"><rect x="317.5" y="193.5" width="607" height="444" fill="none" stroke="#f33b3b" stroke-width="3"/></svg>
<!-- 连接 button -->
<div class="a" style="left:167px;top:94px;width:62px;height:19px;background:#c6def5;border:1px solid #3d87d2"></div>
<div class="a" style="left:216px;top:94px;width:1px;height:19px;background:#3d87d2"></div>
<div class="a" style="left:217px;top:95px;width:11px;height:17px;background:#a8cbef"></div>
<svg class="a" style="left:168px;top:94px" width="60" height="20">
 <circle cx="8" cy="13" r="5.5" fill="#a9cdeb" stroke="#3b7bc0"/><rect x="8.5" y="3.5" width="9" height="9" fill="#c0daf0" stroke="#3b7bc0"/>
 <path d="M53 9h6l-3 3.5z" fill="#222"/>
</svg>
<div class="t" style="left:190px;top:98px;color:#222">连接</div>
<!-- dropdown menu -->
<div class="a" style="left:166px;top:114px;width:137px;height:124px;background:#fff;border:1px solid #a8a8a8"></div>
<div class="a" style="left:167px;top:197px;width:135px;height:38px;background:#cfe7f8;border:1px dotted #3d6fb5"></div>
<svg class="a" style="left:166px;top:114px" width="40" height="124" viewBox="166 114 40 124">
 <g stroke="#3b80c6" stroke-width="1.4">
 <rect x="181.4" y="121.2" width="18" height="18.3" fill="#b2d3ee"/>
 <circle cx="181" cy="138.3" r="9.7" fill="#b9d7ef" fill-opacity="0.85"/>
 <rect x="181.4" y="159.4" width="18" height="18.3" fill="#b2d3ee"/>
 <circle cx="181" cy="175.3" r="9.7" fill="#b9d7ef" fill-opacity="0.85"/>
 <rect x="181.4" y="202.3" width="18" height="18.3" fill="#b2d3ee"/>
 <circle cx="181" cy="219" r="9.7" fill="#b9d7ef" fill-opacity="0.85"/>
 </g>
 <path d="M183.5 178l7-6v3.5h4.5a5 5 0 0 1 5 5v5.5h-4v-5a1.5 1.5 0 0 0-1.5-1.5h-4v3.5z" fill="#1f7ad6" stroke="#fff" stroke-width="1"/>
 <g transform="translate(2,-1)"><path d="M187 227.5a5.5 5.5 0 0 1 6.5-6.5" fill="none" stroke="#2c86e0" stroke-width="2.2"/><path d="M192.5 218l3.5 3-3.5 3z" fill="#2c86e0"/><path d="M198 224.5a5.5 5.5 0 0 1-6.5 6.5" fill="none" stroke="#f0581e" stroke-width="2.2"/><path d="M192.5 234l-3.5-3 3.5-3z" fill="#f0581e"/></g>
</svg>
<div class="t" style="left:204px;top:130px;font-size:11.3px;color:#222">连接几何图形</div>
<div class="t" style="left:204px;top:170px;font-size:11.3px;color:#222">取消连接几何图形</div>
<div class="t" style="left:204px;top:213px;font-size:11.3px;color:#222">切换连接顺序</div>
<!-- red boxes and badges -->
<svg class="a" style="left:0;top:0" width="600" height="260" viewBox="0 0 600 260">
 <rect x="166" y="93" width="75" height="21" fill="none" stroke="#f33b3b" stroke-width="2.2"/>
 <rect x="163.5" y="194.5" width="140.5" height="41.5" fill="none" stroke="#f33b3b" stroke-width="3"/>
 <circle cx="194.3" cy="79.6" r="10" fill="#ef3535"/>
 <circle cx="151.5" cy="213.2" r="10" fill="#ef3535"/>
 <circle cx="489.6" cy="183.6" r="9.7" fill="#ef3535"/>
</svg>
<div class="t" style="left:190px;top:73px;font-size:13.5px;color:#fff">5</div>
<div class="t" style="left:147.5px;top:206.5px;font-size:13.5px;color:#fff">6</div>
<div class="t" style="left:485.5px;top:177px;font-size:13.5px;color:#fff">7</div>
<!-- status bar -->
<div class="a" style="left:224px;top:691px;width:853px;height:6px;background:#ececec"></div>
<div class="t" style="left:245px;top:693px;font-size:11px;color:#222">1 : 100</div>
<svg class="a" style="left:290px;top:691px" width="300" height="6" viewBox="290 691 300 6">
 <rect x="300" y="693" width="14" height="5" fill="#444"/><rect x="302" y="695" width="10" height="2" fill="#ddd"/>
 <path d="M322 697l4-4h9" fill="none" stroke="#3a86d8" stroke-width="1.4"/>
 <circle cx="345" cy="697" r="3.5" fill="#f7c51a"/><path d="M345 692v-1" stroke="#f7a51a"/>
 <circle cx="367" cy="697" r="2.5" fill="none" stroke="#2a6fd0" stroke-width="1.2"/>
 <path d="M382 697l3-3h6l2 2" fill="none" stroke="#666" stroke-width="1.2"/>
 <rect x="404" y="694" width="10" height="4" fill="none" stroke="#2a6fd0" stroke-width="1.2"/><path d="M408 692v2" stroke="#2a6fd0"/>
 <path d="M422 697h6l2-3" fill="none" stroke="#2a6fd0" stroke-width="1.2"/>
 <path d="M440 697a6 6 0 0 1 12 0" fill="none" stroke="#555" stroke-width="1.2"/>
 <rect x="461" y="693" width="13" height="5" fill="none" stroke="#6aa0d8" stroke-width="1.2"/>
 <circle cx="487" cy="697" r="2" fill="none" stroke="#2a6fd0"/>
 <path d="M502 695h13M504 693v2M508 693v2M512 693v2" stroke="#333" stroke-width="1.2"/>
 <path d="M521 697l4-4h8l2 3" fill="none" stroke="#666" stroke-width="1.2"/>
 <path d="M543 697l5-4h6" fill="none" stroke="#555" stroke-width="1.2"/>
 <path d="M561 694h14M561 692v4M575 692v4" stroke="#333" stroke-width="1.2"/>
</svg>

<!-- watermark -->
<svg class="a" style="left:836px;top:628px" width="50" height="44" viewBox="836 628 50 44">
 <g fill="#fff" stroke="#9c9c9c" stroke-width="1.5" style="filter:drop-shadow(1px 1px 0.6px #c4c4c4)">
 <path d="M855 633c-8 0-14 5.5-14 12 0 3.6 1.8 6.8 4.8 9l-1.8 5.5 6-3.3c1.6.5 3.3.8 5 .8 8 0 14-5.5 14-12s-6-12-14-12z"/>
 <path d="M869 644c-7.4 0-13.2 5-13.2 11.2s5.8 11.2 13.2 11.2c1.5 0 3-.2 4.3-.6l5 2.7-1.3-4.4c3-2 5-5.2 5-8.9 0-6.2-5.8-11.2-13-11.2z"/>
 </g>
 <g fill="#9c9c9c"><circle cx="850" cy="641.5" r="1.5"/><circle cx="859" cy="641.5" r="1.5"/><circle cx="865" cy="653" r="1.4"/><circle cx="873" cy="653" r="1.4"/></g>
</svg>
<div class="t" style="left:889px;top:639px;font-size:26px;letter-spacing:0.8px;font-weight:300;color:#9a9a9a;text-shadow:1px 1px 1px #d4d4d4">元培BIM社团</div>
</body></html>
